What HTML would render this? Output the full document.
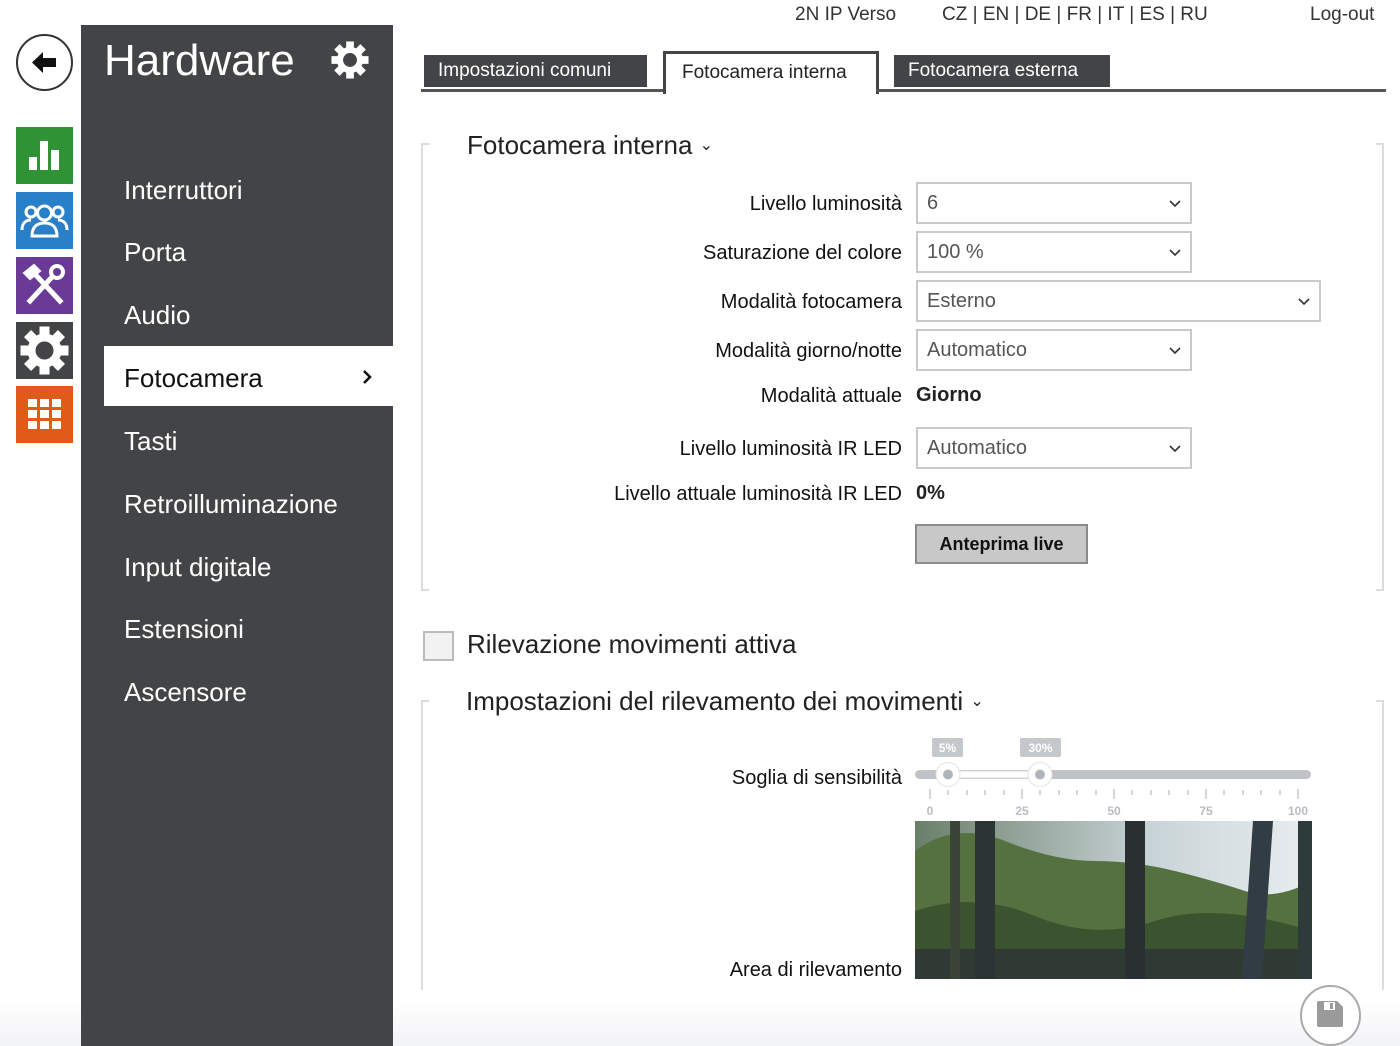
<!DOCTYPE html>
<html><head><meta charset="utf-8"><style>
*{margin:0;padding:0;box-sizing:border-box}
body{width:1400px;height:1046px;position:relative;background:#fff;font-family:"Liberation Sans",sans-serif;color:#222;overflow:hidden}
.a{position:absolute;white-space:nowrap}
.rail{position:absolute;left:16px;width:57px;height:57px}
.side{position:absolute;left:81px;top:25px;width:312px;height:1021px;background:#434446}
.nav{position:absolute;left:124px;color:#fff;font-size:26px;line-height:30px}
.lbl{position:absolute;right:498px;font-size:20px;line-height:24px;color:#111}
.sel{position:absolute;left:916px;width:276px;height:42px;border:2px solid #c9c9c9;background:#fff;font-size:20px;color:#555;padding:8px 0 0 9px}
.sel svg{position:absolute;right:9px;top:16px}
.tab{position:absolute;top:55px;height:32px;background:#434446;color:#fff;font-size:19px;padding:5px 0 0 14px}
.br{position:absolute;width:8px;border:2px solid #ddd}
</style></head><body>
<div class="a" style="left:795px;top:4px;font-size:19px;color:#333">2N IP Verso</div>
<div class="a" style="left:942px;top:4px;font-size:19px;color:#333">CZ | EN | DE | FR | IT | ES | RU</div>
<div class="a" style="left:1310px;top:4px;font-size:19px;color:#333">Log-out</div>

<!-- rail -->
<div class="a" style="left:16px;top:34px;width:57px;height:57px;border:2px solid #333;border-radius:50%"></div>
<svg class="a" style="left:26px;top:44px" width="37" height="37" viewBox="0 0 37 37"><path d="M6 18.5L17 8v6h13v9H17v6z" fill="#111"/></svg>
<div class="rail" style="top:127px;background:#2f9234"><svg width="57" height="57"><rect x="13" y="30" width="8" height="13" fill="#fff"/><rect x="24" y="14" width="8" height="29" fill="#fff"/><rect x="35" y="23" width="8" height="20" fill="#fff"/></svg></div>
<div class="rail" style="top:192px;background:#2a7fc9"><svg width="57" height="57" fill="none" stroke="#fff" stroke-width="3"><circle cx="28.5" cy="21" r="7"/><path d="M16 44c0-9 5-13 12.5-13S41 35 41 44z"/><circle cx="15" cy="20" r="5"/><circle cx="42" cy="20" r="5"/><path d="M6 38c0-7 4-10 9-10M51 38c0-7-4-10-9-10"/></svg></div>
<div class="rail" style="top:257px;background:#6b3a97"><svg width="57" height="57" stroke="#fff" stroke-width="5" fill="none" stroke-linecap="square"><path d="M16 14l28 30M14 44l22-24"/><path d="M8 16l10-8 6 6-10 8z" fill="#fff" stroke-width="2"/><circle cx="41" cy="15" r="6" stroke-width="4"/></svg></div>
<div class="rail" style="top:322px;background:#434446"><svg width="57" height="57" viewBox="0 0 57 57"><g fill="#fff" transform="translate(28.5 28.5)"><circle r="17"/><g id="t"><rect x="-5" y="-24" width="10" height="10"/></g><use href="#t" transform="rotate(45)"/><use href="#t" transform="rotate(90)"/><use href="#t" transform="rotate(135)"/><use href="#t" transform="rotate(180)"/><use href="#t" transform="rotate(225)"/><use href="#t" transform="rotate(270)"/><use href="#t" transform="rotate(315)"/></g><circle cx="28.5" cy="28.5" r="9" fill="#434446"/></svg></div>
<div class="rail" style="top:386px;background:#e05a1a"><svg width="57" height="57" fill="#fff"><rect x="12" y="13" width="9" height="8"/><rect x="24" y="13" width="9" height="8"/><rect x="36" y="13" width="9" height="8"/><rect x="12" y="24" width="9" height="8"/><rect x="24" y="24" width="9" height="8"/><rect x="36" y="24" width="9" height="8"/><rect x="12" y="35" width="9" height="8"/><rect x="24" y="35" width="9" height="8"/><rect x="36" y="35" width="9" height="8"/></svg></div>

<div class="side"></div>
<div class="a" style="left:104px;top:36px;font-size:44px;color:#fff">Hardware</div>
<svg class="a" style="left:328px;top:38px" width="44" height="44" viewBox="0 0 57 57"><g fill="#fff" transform="translate(28.5 28.5)"><circle r="17"/><use href="#t"/><use href="#t" transform="rotate(45)"/><use href="#t" transform="rotate(90)"/><use href="#t" transform="rotate(135)"/><use href="#t" transform="rotate(180)"/><use href="#t" transform="rotate(225)"/><use href="#t" transform="rotate(270)"/><use href="#t" transform="rotate(315)"/></g><circle cx="28.5" cy="28.5" r="9" fill="#434446"/></svg>
<div class="nav" style="top:175px">Interruttori</div>
<div class="nav" style="top:237px">Porta</div>
<div class="nav" style="top:300px">Audio</div>
<div class="a" style="left:104px;top:346px;width:289px;height:60px;background:#fff"></div>
<div class="nav" style="top:363px;color:#111">Fotocamera</div>
<svg class="a" style="left:361px;top:369px" width="12" height="16"><path d="M3 2l6 6-6 6" stroke="#111" stroke-width="2.5" fill="none"/></svg>
<div class="nav" style="top:426px">Tasti</div>
<div class="nav" style="top:489px">Retroilluminazione</div>
<div class="nav" style="top:552px">Input digitale</div>
<div class="nav" style="top:614px">Estensioni</div>
<div class="nav" style="top:677px">Ascensore</div>

<!-- tabs -->
<div class="tab" style="left:424px;width:223px">Impostazioni comuni</div>
<div class="a" style="left:663px;top:51px;width:216px;height:43px;border:3px solid #444;border-bottom:none;background:#fff;font-size:19px;padding:8px 0 0 16px">Fotocamera interna</div>
<div class="tab" style="left:894px;width:216px">Fotocamera esterna</div>
<div class="a" style="left:421px;top:89px;width:242px;height:3px;background:#555"></div>
<div class="a" style="left:876px;top:89px;width:510px;height:3px;background:#555"></div>

<!-- section 1 -->
<div class="br" style="left:421px;top:143px;height:448px;border-right:none"></div>
<div class="br" style="left:1376px;top:143px;height:448px;border-left:none"></div>
<div class="a" style="left:467px;top:130px;font-size:26px;color:#222">Fotocamera interna <span style="font-size:16px;position:relative;top:-4px">&#8964;</span></div>

<div class="lbl" style="top:192px">Livello luminosità</div>
<div class="sel" style="top:182px">6<svg width="12" height="8"><path d="M1 1l5 5 5-5" stroke="#333" stroke-width="1.6" fill="none"/></svg></div>
<div class="lbl" style="top:241px">Saturazione del colore</div>
<div class="sel" style="top:231px">100 %<svg width="12" height="8"><path d="M1 1l5 5 5-5" stroke="#333" stroke-width="1.6" fill="none"/></svg></div>
<div class="lbl" style="top:290px">Modalità fotocamera</div>
<div class="sel" style="top:280px;width:405px">Esterno<svg width="12" height="8"><path d="M1 1l5 5 5-5" stroke="#333" stroke-width="1.6" fill="none"/></svg></div>
<div class="lbl" style="top:339px">Modalità giorno/notte</div>
<div class="sel" style="top:329px">Automatico<svg width="12" height="8"><path d="M1 1l5 5 5-5" stroke="#333" stroke-width="1.6" fill="none"/></svg></div>
<div class="lbl" style="top:384px">Modalità attuale</div>
<div class="a" style="left:916px;top:384px;font-size:20px;font-weight:bold">Giorno</div>
<div class="lbl" style="top:437px">Livello luminosità IR LED</div>
<div class="sel" style="top:427px">Automatico<svg width="12" height="8"><path d="M1 1l5 5 5-5" stroke="#333" stroke-width="1.6" fill="none"/></svg></div>
<div class="lbl" style="top:482px">Livello attuale luminosità IR LED</div>
<div class="a" style="left:916px;top:482px;font-size:20px;font-weight:bold">0%</div>
<div class="a" style="left:915px;top:524px;width:173px;height:40px;background:#c8c8c8;border:2px solid #8a8a8a;font-size:18px;font-weight:bold;text-align:center;padding-top:8px;color:#111">Anteprima live</div>

<!-- checkbox -->
<div class="a" style="left:423px;top:631px;width:31px;height:30px;border:2px solid #bbb;background:#f2f2f2"></div>
<div class="a" style="left:467px;top:629px;font-size:26px">Rilevazione movimenti attiva</div>

<!-- section 2 -->
<div class="br" style="left:421px;top:700px;height:290px;border-right:none;border-bottom:none"></div>
<div class="br" style="left:1376px;top:700px;height:290px;border-left:none;border-bottom:none"></div>
<div class="a" style="left:466px;top:686px;font-size:26px">Impostazioni del rilevamento dei movimenti <span style="font-size:16px;position:relative;top:-4px">&#8964;</span></div>
<div class="lbl" style="top:766px">Soglia di sensibilità</div>
<svg class="a" style="left:910px;top:735px" width="410" height="86" font-family="Liberation Sans" font-weight="bold">
 <rect x="22" y="3" width="31" height="19" rx="2" fill="#c4c7cb"/><text x="37.5" y="17" fill="#fff" font-size="12" text-anchor="middle">5%</text>
 <rect x="110" y="3" width="41" height="19" rx="2" fill="#c4c7cb"/><text x="130.5" y="17" fill="#fff" font-size="12" text-anchor="middle">30%</text>
 <rect x="5" y="35" width="396" height="9" rx="4.5" fill="#bfc3c8"/>
 <rect x="38" y="36" width="92" height="7" fill="#fff" stroke="#ddd"/>
 <circle cx="38" cy="39.5" r="12" fill="#fff" stroke="#e3e3e3"/><circle cx="38" cy="39.5" r="5" fill="#b0b5bb"/>
 <circle cx="130" cy="39.5" r="12" fill="#fff" stroke="#e3e3e3"/><circle cx="130" cy="39.5" r="5" fill="#b0b5bb"/>
 <g stroke="#bbb" stroke-width="1.2">
 <path d="M20 54v10M112 54v10M204 54v10M296 54v10M388 54v10"/>
 <path d="M38 55v5M57 55v5M75 55v5M94 55v5M130 55v5M149 55v5M167 55v5M186 55v5M222 55v5M241 55v5M259 55v5M278 55v5M314 55v5M333 55v5M351 55v5M370 55v5"/></g>
 <g fill="#b9bcc0" font-size="12" text-anchor="middle"><text x="20" y="80">0</text><text x="112" y="80">25</text><text x="204" y="80">50</text><text x="296" y="80">75</text><text x="388" y="80">100</text></g>
</svg>
<div class="lbl" style="top:958px">Area di rilevamento</div>
<svg class="a" style="left:915px;top:821px" width="397" height="158">
 <defs><linearGradient id="sk" x1="0" y1="0" x2="1" y2="0"><stop offset="0" stop-color="#6a7f6a"/><stop offset=".6" stop-color="#c9d4d8"/><stop offset="1" stop-color="#e9eef0"/></linearGradient></defs>
 <rect width="397" height="158" fill="url(#sk)"/>
 <path d="M0 30Q40 0 90 20T180 40T260 50T330 70T397 60V158H0z" fill="#55713f"/>
 <path d="M0 90Q60 70 120 95T240 100T397 110V158H0z" fill="#3c5330"/>
 <rect x="0" y="128" width="397" height="30" fill="#2f3a34"/>
 <rect x="60" y="0" width="20" height="158" fill="#2c3434"/><rect x="35" y="0" width="10" height="158" fill="#3b4436"/>
 <rect x="210" y="0" width="20" height="158" fill="#2a3032"/>
 <rect x="338" y="0" width="20" height="158" fill="#323c45" transform="skewX(-4)"/>
 <rect x="383" y="0" width="14" height="158" fill="#2f3a3a"/>
</svg>

<div class="a" style="left:0;top:1000px;width:1400px;height:46px;background:linear-gradient(#fff,#f2f3f5);z-index:-1"></div>
<div class="a" style="left:1300px;top:985px;width:61px;height:61px;border:2px solid #aaa;border-radius:50%;background:#fff"></div>
<svg class="a" style="left:1316px;top:1000px" width="28" height="28"><path d="M1 3a2 2 0 0 1 2-2h18l6 6v18a2 2 0 0 1-2 2H3a2 2 0 0 1-2-2z" fill="#9a9a9a"/><rect x="8" y="2" width="11" height="8" fill="#fff"/><rect x="14" y="3" width="3" height="6" fill="#9a9a9a"/></svg>
</body></html>
